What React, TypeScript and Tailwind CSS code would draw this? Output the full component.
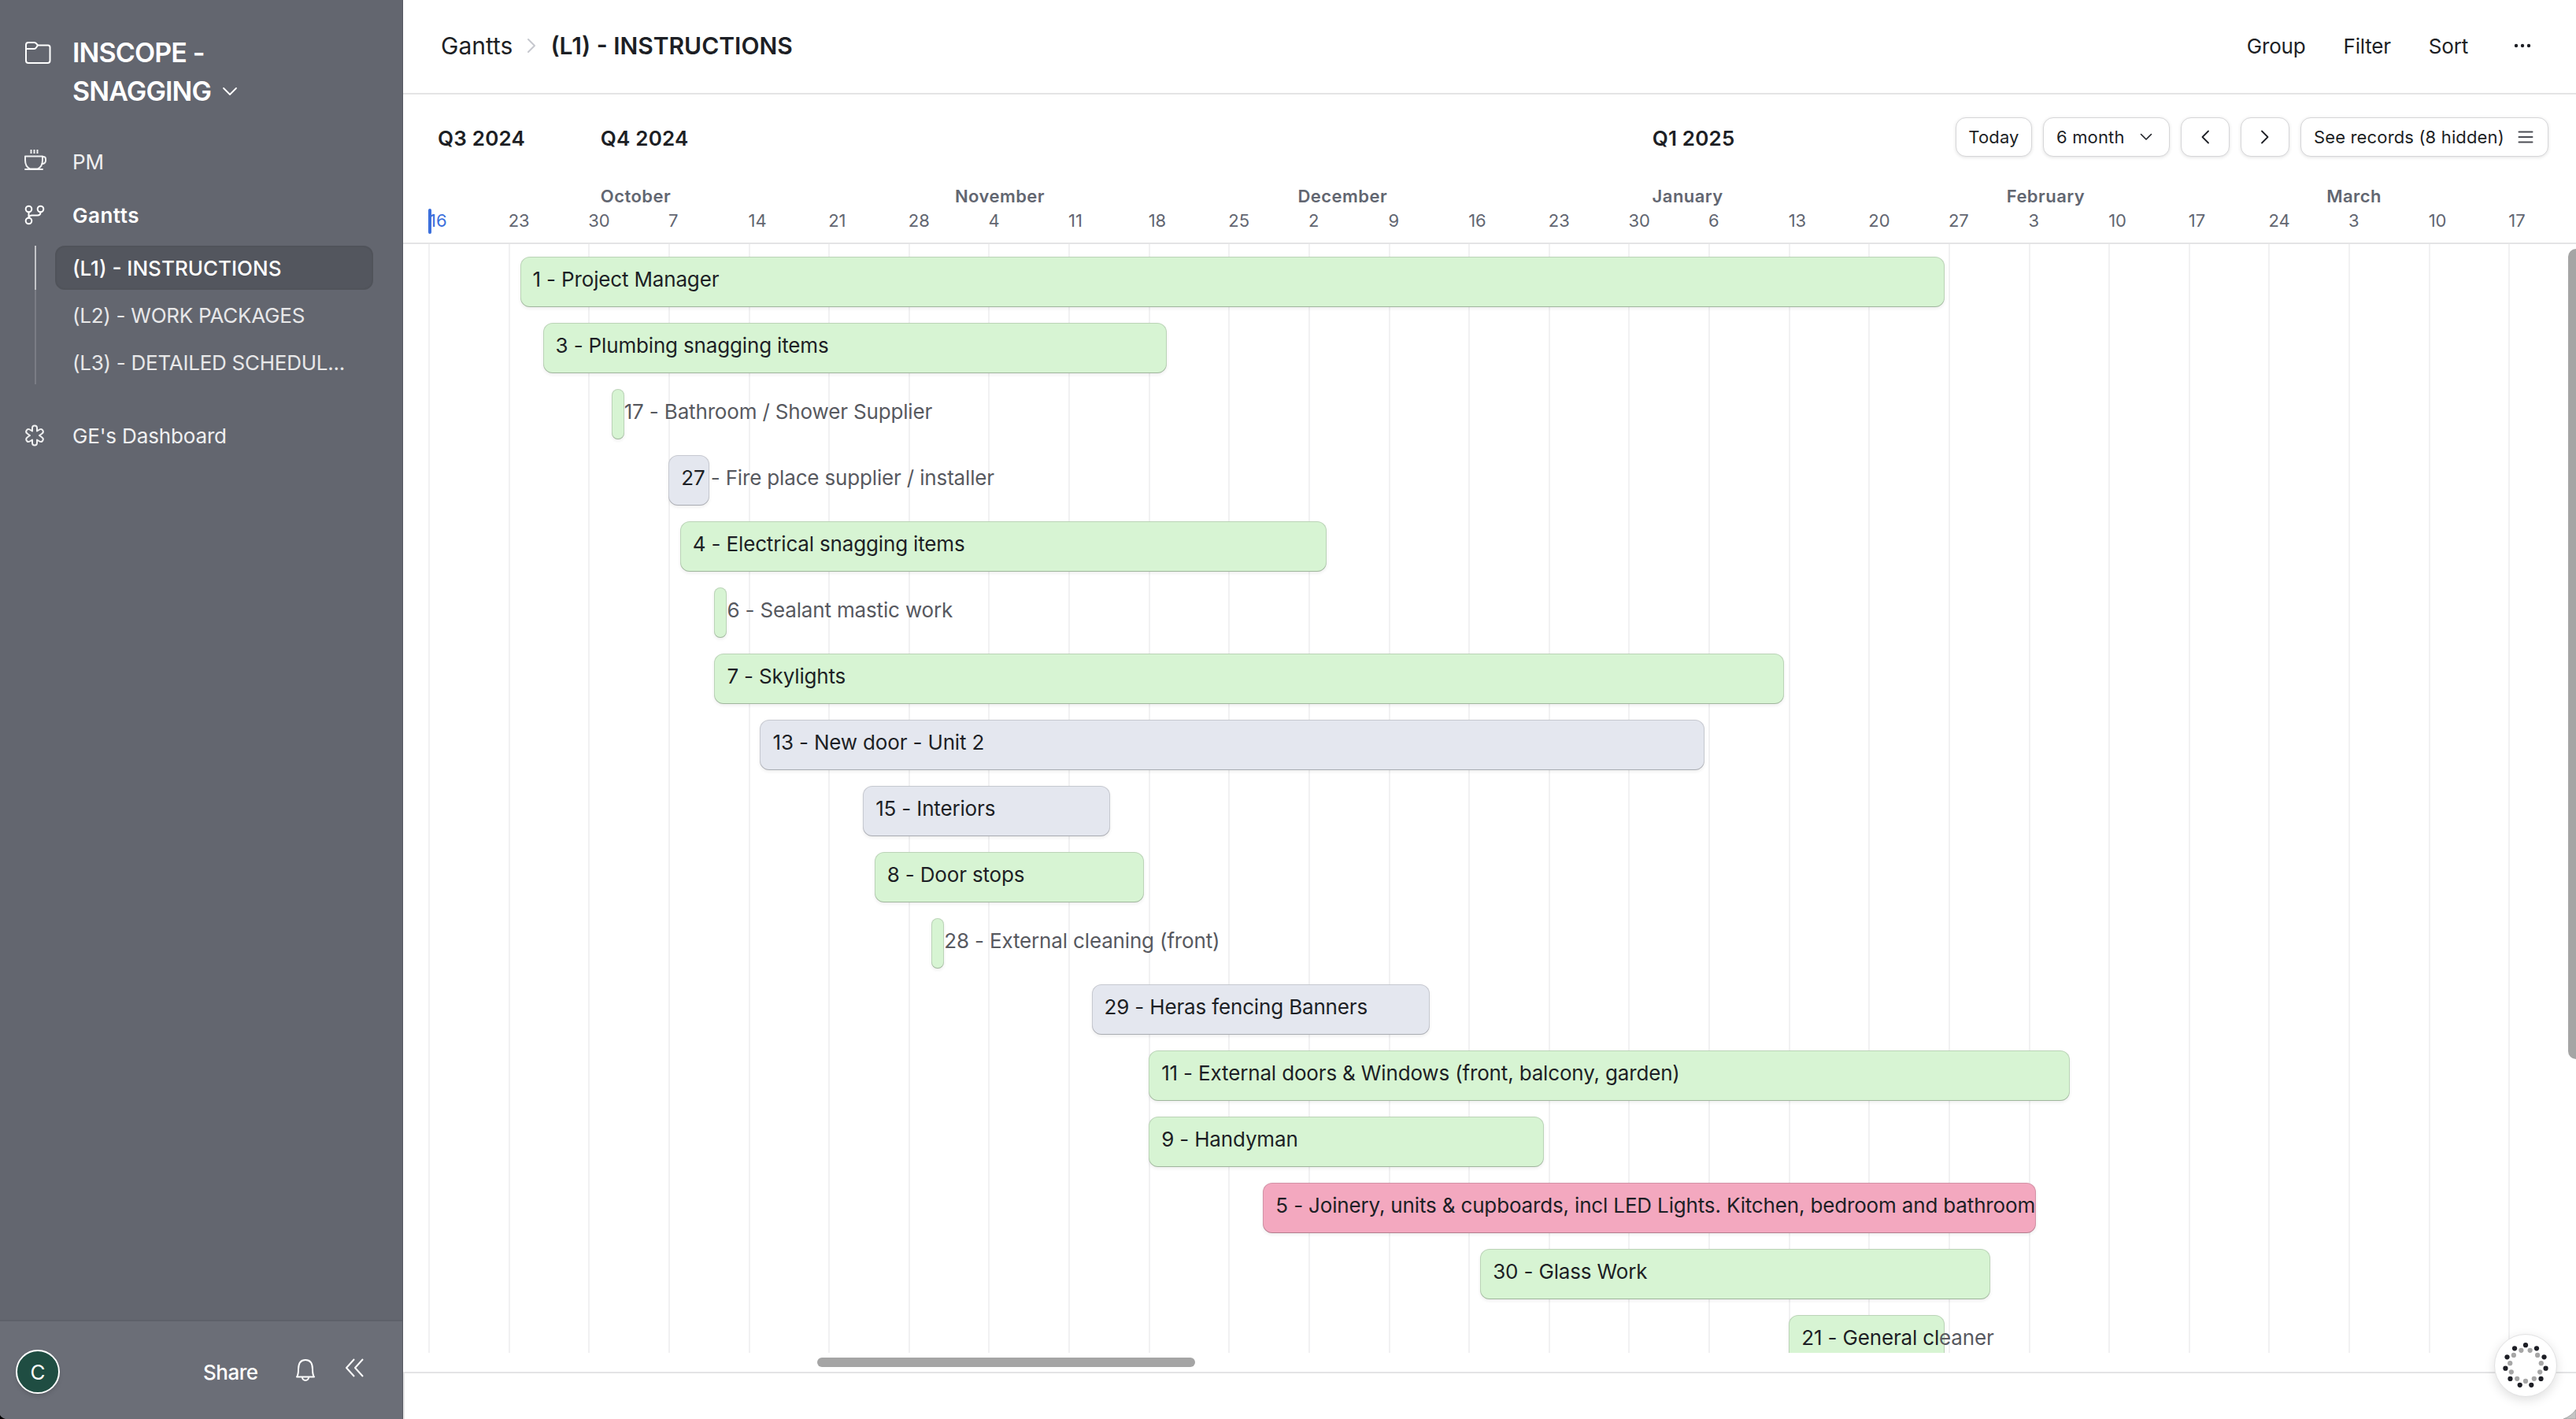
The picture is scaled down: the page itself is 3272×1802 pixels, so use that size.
import React from 'react';

const DAY = 14.52;
const GAP = 6;
const MIN_BAR = 16;

type Tone = 'green' | 'gray' | 'pink';

interface Task {
  label: string;
  start: number;
  end: number;
  tone: Tone;
  // part of the label that runs past the end of the bar
  overflow?: string;
}

const tones: Record<Tone, string> = {
  green: 'bg-[#d7f4d3]',
  gray: 'bg-[#e4e7ef]',
  pink: 'bg-[#f3a8bf]'
};

// start / end are days counted from 16 September
const tasks: Task[] = [
  { label: '1 - Project Manager', start: 8, end: 133, tone: 'green' },
  { label: '3 - Plumbing snagging items', start: 10, end: 65, tone: 'green' },
  { label: '', overflow: '17 - Bathroom / Shower Supplier', start: 16, end: 17, tone: 'green' },
  { label: '27', overflow: ' - Fire place supplier / installer', start: 21, end: 25, tone: 'gray' },
  { label: '4 - Electrical snagging items', start: 22, end: 79, tone: 'green' },
  { label: '', overflow: '6 - Sealant mastic work', start: 25, end: 26, tone: 'green' },
  { label: '7 - Skylights', start: 25, end: 119, tone: 'green' },
  { label: '13 - New door - Unit 2', start: 29, end: 112, tone: 'gray' },
  { label: '15 - Interiors', start: 38, end: 60, tone: 'gray' },
  { label: '8 - Door stops', start: 39, end: 63, tone: 'green' },
  { label: '', overflow: '28 - External cleaning (front)', start: 44, end: 45, tone: 'green' },
  { label: '29 - Heras fencing Banners', start: 58, end: 88, tone: 'gray' },
  { label: '11 - External doors & Windows (front, balcony, garden)', start: 63, end: 144, tone: 'green' },
  { label: '9 - Handyman', start: 63, end: 98, tone: 'green' },
  {
    label: '5 - Joinery, units & cupboards, incl LED Lights. Kitchen, bedroom and bathroom',
    start: 73,
    end: 141,
    tone: 'pink'
  },
  { label: '30 - Glass Work', start: 92, end: 137, tone: 'green' },
  { label: '21 - General cl', overflow: 'eaner', start: 119, end: 133, tone: 'green' }
];

const quarters = [
  { name: 'Q3 2024', days: 15 },
  { name: 'Q4 2024', days: 92 },
  { name: 'Q1 2025', days: 24 }
];

const months = [
  { name: '', days: 15 },
  { name: 'October', days: 31 },
  { name: 'November', days: 30 },
  { name: 'December', days: 31 },
  { name: 'January', days: 31 },
  { name: 'February', days: 28 },
  { name: 'March', days: 31 }
];

const weeks = [
  16, 23, 30, 7, 14, 21, 28, 4, 11, 18, 25, 2, 9, 16, 23, 30, 6, 13, 20, 27, 3, 10, 17, 24, 3, 10, 17
];

const Icon: React.FC<{ w: number; h: number; sw?: number; className?: string; children: React.ReactNode }> = ({
  w,
  h,
  sw = 2,
  className = '',
  children
}) => (
  <svg
    width={w}
    height={h}
    viewBox={`0 0 ${w} ${h}`}
    fill="none"
    stroke="currentColor"
    strokeWidth={sw}
    strokeLinecap="round"
    strokeLinejoin="round"
    className={`shrink-0 ${className}`}
  >
    {children}
  </svg>
);

const Sidebar = () => (
  <aside className="w-[512px] shrink-0 flex flex-col bg-[#63666f] border-r border-[#555861] text-white">
    <div className="flex-1 pt-[42px]">
      <div className="flex pl-[31px]">
        <Icon w={34} h={28} className="mt-[11px]">
          <path d="M2 4a3 3 0 0 1 3-3h7.500q1.500 0 2.500 1.200l2 2.300h13a2.500 2.500 0 0 1 2.500 2.500v17a3 3 0 0 1-3 3H5a3 3 0 0 1-3-3z" />
          <path d="M2 9h10.500q1.500 0 2.500-1.500l2-3" />
        </Icon>
        <h1 className="ml-[27px] text-[34px] leading-[49px] font-semibold tracking-[-0.85px]">
          INSCOPE -
          <span className="flex items-center">
            SNAGGING
            <Icon w={20} h={12} sw={1.8} className="ml-[14px]">
              <path d="M2 2l8 8 8-8" />
            </Icon>
          </span>
        </h1>
      </div>

      <nav className="mt-[31px] text-[26px] tracking-[-0.2px]">
        <div className="flex items-center h-[68px] pl-[30px] text-white/90">
          <Icon w={30} h={28} className="-mt-[5px]">
            <path d="M9.500 1v5M13.500 1v5M17.500 1v5" strokeLinecap="butt" />
            <path d="M2 9.500h22v5c0 6-3 9.500-6 11H8c-3-1.500-6-5-6-11z" />
            <path d="M24 10h1a3 3 0 0 1 3 3v2a4 4 0 0 1-4.500 4M2 26h22" />
          </Icon>
          <span className="ml-[32px]">PM</span>
        </div>
        <div className="flex items-center h-[68px] pl-[31px] font-semibold tracking-[0.5px]">
          <Icon w={26} h={26}>
            <circle cx="5.500" cy="5.500" r="3.800" />
            <circle cx="20.500" cy="5.500" r="3.800" />
            <circle cx="5.500" cy="20.500" r="3.800" />
            <path d="M5.500 9.500v7M20.500 9.500c0 2.500-1.500 4-4 4h-7c-2 0-4 1.500-4 3" />
          </Icon>
          <span className="ml-[35px]">Gantts</span>
        </div>
        <div className="mt-[5px] flex pl-[44px]">
          <div className="w-[2px] h-[176px] bg-white/15">
            <div className="h-[56px] bg-white/55" />
          </div>
          <div className="ml-6 w-[404px] flex flex-col gap-1 text-white/85 tracking-[-0.25px]">
            <div className="h-[56px] pl-[22px] flex items-center rounded-xl bg-[#53565e] border-2 border-[#50535a] font-medium text-white tracking-normal">
              <span className="-ml-[2px]">(L1) - INSTRUCTIONS</span>
            </div>
            <div className="h-[56px] pl-[22px] flex items-center">(L2) - WORK PACKAGES</div>
            <div className="h-[56px] pl-[22px] flex items-center">(L3) - DETAILED SCHEDUL...</div>
          </div>
        </div>
        <div className="mt-[31px] flex items-center h-[68px] pl-[31px] text-white/90 tracking-[-0.15px]">
          <Icon w={26} h={28}>
            <path d="M10 8.400V4.500a3 3 0 0 1 6 0V8.400L19.200 6.500a3 3 0 0 1 3 5.200L19 14l3.200 2.300a3 3 0 0 1-3 5.200L16 19.600v3.900a3 3 0 0 1-6 0v-3.900l-3.200 1.900a3 3 0 0 1-3-5.200L7 14l-3.200-2.300a3 3 0 0 1 3-5.200z" />
          </Icon>
          <span className="ml-[35px]">GE's Dashboard</span>
        </div>
      </nav>
    </div>

    <div className="h-[126px] flex items-center bg-[#6b6e77] border-t-2 border-[#5e616a] pl-5 pt-1">
      <div className="size-14 rounded-full bg-[#1f4d42] border-2 border-white flex items-center justify-center text-[26px] shadow-md">
        C
      </div>
      <span className="ml-[182px] text-[26px] font-medium tracking-[-0.5px]">Share</span>
      <Icon w={26} h={30} className="ml-[47px] -mt-[5px]">
        <path d="M2 23.500c1.500-2 2-5 2-9.500 0-8 3.500-12 9-12s9 4 9 12c0 4.500.5 7.500 2 9.500z" />
        <path d="M9 24a4 4 0 0 0 8 0" />
      </Icon>
      <Icon w={26} h={26} className="ml-[37px] -mt-[10px]">
        <path d="M12 2L2 13l10 11M23 2L13 13l10 11" strokeLinecap="butt" />
      </Icon>
    </div>
  </aside>
);

const ControlButton: React.FC<{ className: string; children: React.ReactNode }> = ({ className, children }) => (
  <button
    className={`h-[50px] flex items-center rounded-[13px] bg-white border border-[#d6d6d8] shadow-[0_1px_4px_rgba(0,0,0,0.12)] text-[22px] tracking-[0.15px] ${className}`}
  >
    {children}
  </button>
);

const TimelineHeader = () => (
  <div className="h-[190px] pl-8 border-b-2 border-[#e4e4e5] overflow-hidden">
    <div className="mt-7 h-[54px] flex items-center">
      {quarters.map((q, i) => (
        <div
          key={q.name}
          className={`shrink-0 text-[26px] font-semibold tracking-[0.2px] ${i === 0 ? 'pl-3' : 'pl-px'}`}
          style={{ width: q.days * DAY }}
        >
          {q.name}
        </div>
      ))}
      <div className="ml-auto pr-[35px] -mt-[2px] flex gap-[14px]">
        <ControlButton className="w-[97px] justify-center tracking-[-0.2px]">Today</ControlButton>
        <ControlButton className="w-[161px] pl-4">
          6 month
          <Icon w={16} h={10} sw={1.6} className="ml-[19px]">
            <path d="M1.500 1.500L8 8l6.500-6.500" />
          </Icon>
        </ControlButton>
        <ControlButton className="w-[62px] justify-center">
          <Icon w={12} h={18} sw={1.8}>
            <path d="M10 1.500L2.500 9l7.500 7.500" />
          </Icon>
        </ControlButton>
        <ControlButton className="w-[62px] justify-center">
          <Icon w={12} h={18} sw={1.8}>
            <path d="M2 1.500L9.500 9 2 16.500" />
          </Icon>
        </ControlButton>
        <ControlButton className="w-[315px] pl-4">
          See records (8 hidden)
          <Icon w={20} h={16} className="ml-[17px] text-[#4c4e55]">
            <path d="M1.500 1.500h17M1.500 8h17M1.500 14.500h17" />
          </Icon>
        </ControlButton>
      </div>
    </div>
    <div className="mt-8 flex h-[30px] items-center text-[22px] font-semibold tracking-[0.45px] text-[#626671]">
      {months.map((m, i) => (
        <div key={i} className="shrink-0 pl-px" style={{ width: m.days * DAY }}>
          {m.name}
        </div>
      ))}
    </div>
    <div className="flex h-8 items-center text-[22px] text-[#626671]">
      {weeks.map((d, i) => (
        <div
          key={i}
          className={`shrink-0 h-8 leading-8 ${i === 0 ? 'relative text-[#3b6fdc] pl-px' : ''}`}
          style={{ width: 7 * DAY }}
        >
          {i === 0 && <div className="absolute left-0 top-px w-[4px] h-8 rounded-full bg-[#3b6fdc]" />}
          {d}
        </div>
      ))}
    </div>
  </div>
);

const TaskRow: React.FC<{ task: Task }> = ({ task }) => {
  const width = Math.max((task.end - task.start) * DAY - GAP, MIN_BAR);
  return (
    <div className="flex h-16 shrink-0" style={{ marginLeft: task.start * DAY }}>
      <div
        className={`shrink-0 rounded-xl shadow-[inset_0_0_0_1px_rgba(0,0,0,0.13),inset_0_-1px_0_rgba(0,0,0,0.14),0_2px_4px_rgba(0,0,0,0.07)] ${tones[task.tone]} ${
          task.overflow ? '' : 'overflow-hidden'
        }`}
        style={{ width }}
      >
        <div className="leading-[58px] whitespace-pre pl-4">
          {task.label}
          {task.overflow && <span className="text-[#57595f]">{task.overflow}</span>}
        </div>
      </div>
    </div>
  );
};

const GanttBody = () => (
  <div className="relative h-[1408px] overflow-hidden">
    <div className="absolute inset-0 pl-8 flex">
      {weeks.map((_, i) => (
        <div key={i} className="shrink-0 border-l-2 border-[#f1f1f2]" style={{ width: 7 * DAY }} />
      ))}
    </div>
    <div className="relative pl-[32.400px] pt-4 flex flex-col gap-5 text-[26px] tracking-[-0.16px]">
      {tasks.map((t, i) => (
        <TaskRow key={i} task={t} />
      ))}
    </div>
  </div>
);

const ring = (count: number, radius: number, offset: number) =>
  Array.from({ length: count }, (_, i) => {
    const a = ((i + offset) / count) * 2 * Math.PI;
    return { x: 40 + radius * Math.sin(a), y: 40 - radius * Math.cos(a) };
  });

const HelpBubble = () => (
  <div className="absolute left-[3168px] top-[1694px] size-20 rounded-full bg-white border border-[#e2e2e3] shadow-[0_4px_14px_rgba(0,0,0,0.13)]">
    <svg viewBox="0 0 80 80" className="size-full">
      {ring(11, 26.5, 0).map((p, i) => (
        <circle key={i} cx={p.x} cy={p.y} r="3.200" fill="#1d1e25" />
      ))}
      {ring(11, 20.5, 0.5).map((p, i) => (
        <circle key={i} cx={p.x} cy={p.y} r="3.200" fill="#a6a6a6" />
      ))}
    </svg>
  </div>
);

export default function App() {
  return (
    <div className="relative w-[3272px] h-[1802px] flex overflow-hidden bg-white text-[#1d1f25] font-['Inter',sans-serif]">
      <Sidebar />
      <main className="flex-1 min-w-0 flex flex-col">
        <header className="h-[120px] flex items-center justify-between border-b-2 border-[#e4e4e5] pl-[48px] pr-[57px] pb-[2px] text-[26px]">
          <div className="flex items-center text-[30px]">
            <span>Gantts</span>
            <Icon w={12} h={20} className="ml-[18px] text-[#c6c8ce]">
              <path d="M2 2l8 8-8 8" />
            </Icon>
            <span className="ml-[18px] font-semibold">(L1) - INSTRUCTIONS</span>
          </div>
          <div className="flex items-center tracking-[-0.2px]">
            <span>Group</span>
            <span className="ml-[48px]">Filter</span>
            <span className="ml-[48px]">Sort</span>
            <svg width="22" height="6" viewBox="0 0 22 6" fill="currentColor" className="ml-[58px]">
              <circle cx="3" cy="3" r="2.200" />
              <circle cx="11" cy="3" r="2.200" />
              <circle cx="19" cy="3" r="2.200" />
            </svg>
          </div>
        </header>
        <TimelineHeader />
        <GanttBody />
        <div className="h-6 pl-[526px] pt-[6px]">
          <div className="w-[480px] h-3 rounded-full bg-[#a5a5a5]" />
        </div>
        <footer className="flex-1 border-t-2 border-[#e4e4e5] border-l-2" />
      </main>

      <div className="absolute right-0 top-[316px] w-[10px] h-[1029px] rounded-l-full bg-[#a5a5a5]" />
      <HelpBubble />

      {/* rounded window corners */}
      <svg width="8" height="8" viewBox="0 0 8 8" className="absolute left-0 bottom-0">
        <path d="M0 3Q2 6.500 7 8H0z" fill="#000" />
      </svg>
      <svg width="16" height="14" viewBox="0 0 16 14" className="absolute right-0 bottom-0">
        <path d="M16 2Q10 10.500 0 14h16z" fill="#c4c4c4" stroke="#999" strokeWidth="0.800" />
      </svg>
    </div>
  );
}
